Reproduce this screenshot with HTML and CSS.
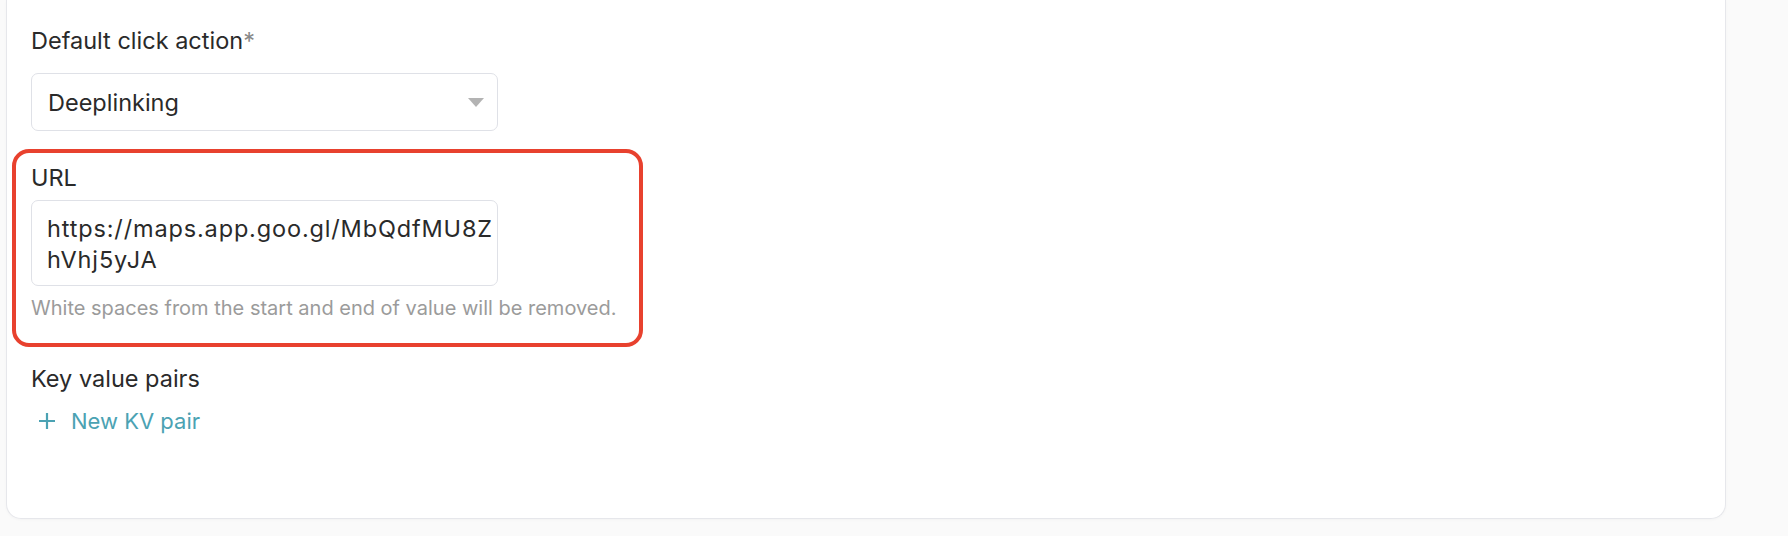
FILE: index.html
```html
<!DOCTYPE html>
<html lang="en">
<head>
    <meta charset="UTF-8">
    <meta name="viewport" content="width=device-width, initial-scale=1.0">
    <title>Click action</title>
    <link rel="stylesheet" href="styles.css">
</head>
<body>
    <div id="card">
        <div class="field">
            <label class="lbl">Default click action<span class="req">*</span></label>
            <div class="select">
                <span>Deeplinking</span>
                <span class="caret"></span>
            </div>
        </div>

        <div class="field" id="urlbox">
            <label class="lbl">URL</label>
            <div class="input">https://maps.app.goo.gl/MbQdfMU8Z<br>hVhj5yJA</div>
            <p class="hint">White spaces from the start and end of value will be removed.</p>
        </div>

        <div class="field">
            <label class="lbl">Key value pairs</label>
            <a class="addkv" href="#">
                <svg width="18" height="18" viewBox="0 0 18 18"><path d="M9 1v16M1 9h16" stroke="currentColor" stroke-width="2.2" fill="none"/></svg>
                New KV pair
            </a>
        </div>
    </div>
</body>
</html>
```

FILE: styles.css
```css
*{
    margin: 0;
    padding: 0;
    box-sizing: border-box;
}
html,body{
    width: 100%;
    height: 100%;
}
body{
    background-color: #fafafa;
    font-family: "Inter", "Liberation Sans", sans-serif;
    color: #2a2a2a;
}
#card{
    margin: 0 62px 0 6px;
    height: 519px;
    background-color: #fff;
    border: 1px solid #e6e7eb;
    border-top: 0;
    border-radius: 0 0 15px 15px;
    box-shadow: 0 1px 3px rgba(0,0,0,0.03);
    padding: 27px 24px 0 24px;
    display: flex;
    flex-direction: column;
    gap: 18px;
}
.field{
    display: flex;
    flex-direction: column;
    align-items: flex-start;
}
.lbl{
    font-size: 23.5px;
    line-height: 28px;
}
.req{
    color: #888;
}
.select{
    margin-top: 18px;
    width: 467px;
    height: 58px;
    border: 1px solid #dfe1e7;
    border-radius: 7px;
    display: flex;
    align-items: center;
    justify-content: space-between;
    padding: 0 13px 0 16px;
    font-size: 23.5px;
}
.caret{
    width: 0;
    height: 0;
    border-left: 8.5px solid transparent;
    border-right: 8.5px solid transparent;
    border-top: 9px solid #b3b3b3;
}
#urlbox{
    margin-left: -19px;
    width: 631px;
    border: 4px solid #e8412e;
    border-radius: 17px;
    padding: 11px 15px 23px 15px;
}
.input{
    margin-top: 8px;
    width: 467px;
    height: 86px;
    border: 1px solid #dfe1e7;
    border-radius: 7px;
    padding: 12px 15px;
    font-size: 23.5px;
    line-height: 31px;
    letter-spacing: 0.85px;
}
.hint{
    margin-top: 10px;
    font-size: 20px;
    line-height: 24px;
    color: #9b9b9b;
}
.addkv{
    margin-top: 14px;
    margin-left: 7px;
    display: flex;
    align-items: center;
    gap: 15px;
    font-size: 22px;
    line-height: 28px;
    color: #4ba2b3;
    text-decoration: none;
}
```
